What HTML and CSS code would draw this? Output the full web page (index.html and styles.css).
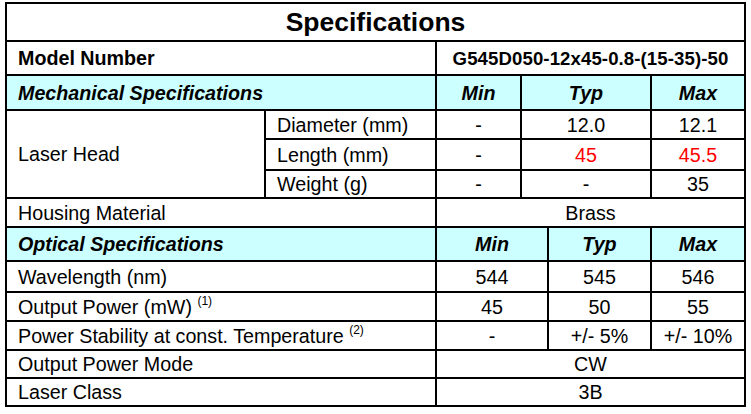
FILE: index.html
```html
<!DOCTYPE html>
<html lang="en">
<head>
<meta charset="utf-8">
<title>Specifications</title>
<link rel="stylesheet" href="styles.css">
</head>
<body>
<div class="spec">
  <div class="c title span-all">Specifications</div>

  <div class="c b left span-ab">Model Number</div>
  <div class="c b model span-cf">G545D050-12x45-0.8-(15-35)-50</div>

  <div class="c hd left span-ab">Mechanical Specifications</div>
  <div class="c hd">Min</div>
  <div class="c hd span-de">Typ</div>
  <div class="c hd">Max</div>

  <div class="c left laser">Laser Head</div>
  <div class="c left">Diameter (mm)</div>
  <div class="c">-</div>
  <div class="c span-de">12.0</div>
  <div class="c">12.1</div>

  <div class="c left">Length (mm)</div>
  <div class="c">-</div>
  <div class="c span-de red">45</div>
  <div class="c red">45.5</div>

  <div class="c left">Weight (g)</div>
  <div class="c">-</div>
  <div class="c span-de">-</div>
  <div class="c">35</div>

  <div class="c left span-ab">Housing Material</div>
  <div class="c span-cf">Brass</div>

  <div class="c hd left span-ab">Optical Specifications</div>
  <div class="c hd span-cd">Min</div>
  <div class="c hd">Typ</div>
  <div class="c hd">Max</div>

  <div class="c left span-ab">Wavelength (nm)</div>
  <div class="c span-cd">544</div>
  <div class="c">545</div>
  <div class="c">546</div>

  <div class="c left span-ab"><span>Output Power (mW) <sup class="note">(1)</sup></span></div>
  <div class="c span-cd">45</div>
  <div class="c">50</div>
  <div class="c">55</div>

  <div class="c left span-ab"><span>Power Stability at const. Temperature <sup class="note">(2)</sup></span></div>
  <div class="c span-cd">-</div>
  <div class="c">+/- 5%</div>
  <div class="c">+/- 10%</div>

  <div class="c left span-ab">Output Power Mode</div>
  <div class="c span-cf">CW</div>

  <div class="c left span-ab">Laser Class</div>
  <div class="c span-cf">3B</div>
</div>
</body>
</html>
```
FILE: styles.css
```css
html, body {
  margin: 0;
  padding: 0;
  background: #ffffff;
}

body {
  font-family: "Liberation Sans", Arial, sans-serif;
  color: #000000;
}

.spec {
  display: grid;
  grid-template-columns: 259px 171px 85px 27px 103px 94px;
  grid-template-rows: 38px 34px 35px 29px 31px 28px 29px 34px 31px 29px 29px 28px 28px;
  width: 739px;
  margin: 2px 0 0 5px;
  border-top: 2px solid #000;
  border-left: 2px solid #000;
}

.c {
  box-sizing: border-box;
  border-right: 2px solid #000;
  border-bottom: 2px solid #000;
  display: flex;
  align-items: center;
  justify-content: center;
  padding-top: 1px;
  font-size: 19.7px;
  white-space: nowrap;
  overflow: hidden;
}

.left {
  justify-content: flex-start;
  padding-left: 11px;
}

.title {
  font-size: 26.5px;
  font-weight: bold;
}

.b {
  font-weight: bold;
}

.model {
  font-size: 18.6px;
  letter-spacing: 0.1px;
}

.hd {
  background: #ccffff;
  font-weight: bold;
  font-style: italic;
}

.red {
  color: #ff0000;
}

.span-all { grid-column: 1 / 7; }
.span-ab { grid-column: 1 / 3; }
.span-cf { grid-column: 3 / 7; }
.span-cd { grid-column: 3 / 5; }
.span-de { grid-column: 4 / 6; }

.laser {
  grid-row: 4 / 7;
}

.note {
  font-size: 12px;
  vertical-align: 9px;
  line-height: 0;
}
```
